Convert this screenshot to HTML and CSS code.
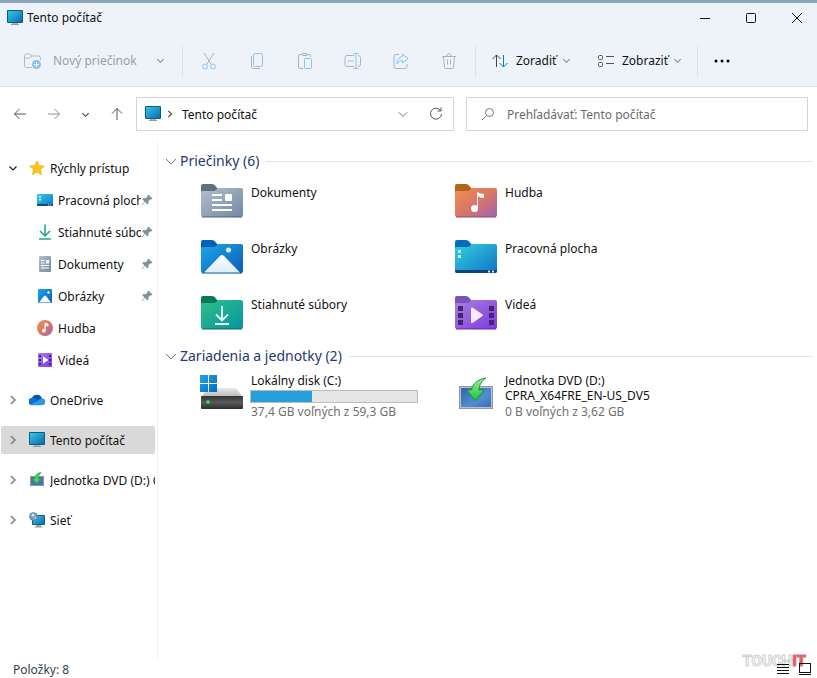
FILE: index.html
```html
<!DOCTYPE html>
<html lang="sk">
<head>
<meta charset="utf-8">
<meta name="viewport" content="width=device-width, initial-scale=1">
<title>Tento počítač</title>
<link rel="stylesheet" href="styles.css">
</head>
<body>
<svg class="sprite" aria-hidden="true">
  <defs>
    <linearGradient id="g-screen" x1="0" y1="0" x2="1" y2="1"><stop offset="0" stop-color="#35c8e8"/><stop offset="1" stop-color="#0a6cae"/></linearGradient>
    <linearGradient id="g-doc" x1="0" y1="0" x2="1" y2="1"><stop offset="0" stop-color="#b3c0ce"/><stop offset="1" stop-color="#7188a5"/></linearGradient>
    <linearGradient id="g-pic" x1="0" y1="0" x2="1" y2="1"><stop offset="0" stop-color="#1ba7ea"/><stop offset="1" stop-color="#0c5cb4"/></linearGradient>
    <linearGradient id="g-down" x1="0" y1="0" x2="1" y2="1"><stop offset="0" stop-color="#2fc08a"/><stop offset="1" stop-color="#0594a0"/></linearGradient>
    <linearGradient id="g-music" x1="0" y1="0" x2="1" y2="1"><stop offset="0" stop-color="#f3914c"/><stop offset=".55" stop-color="#d6746c"/><stop offset="1" stop-color="#9a64b4"/></linearGradient>
    <linearGradient id="g-desk" x1="0" y1="0" x2="1" y2="1"><stop offset="0" stop-color="#33d0e0"/><stop offset="1" stop-color="#1272c4"/></linearGradient>
    <linearGradient id="g-video" x1="0" y1="0" x2="1" y2="1"><stop offset="0" stop-color="#a883dc"/><stop offset="1" stop-color="#8136e2"/></linearGradient>
    <linearGradient id="g-snow" x1="0" y1="0" x2="0" y2="1"><stop offset="0" stop-color="#ffffff"/><stop offset="1" stop-color="#dcedfb"/></linearGradient>
    <linearGradient id="g-drive" x1="0" y1="0" x2="0" y2="1"><stop offset="0" stop-color="#333"/><stop offset=".5" stop-color="#5a5a5a"/><stop offset="1" stop-color="#2c2c2c"/></linearGradient>
    <linearGradient id="g-lid" x1="0" y1="0" x2="0" y2="1"><stop offset="0" stop-color="#e8e8e8"/><stop offset="1" stop-color="#bcbcbc"/></linearGradient>
    <linearGradient id="g-win" x1="0" y1="0" x2="1" y2="1"><stop offset="0" stop-color="#22a6e4"/><stop offset="1" stop-color="#0668bd"/></linearGradient>
    <linearGradient id="g-dvd" x1="0" y1="0" x2="1" y2="1"><stop offset="0" stop-color="#3560a8"/><stop offset=".6" stop-color="#4f8fd0"/><stop offset="1" stop-color="#3d6bb0"/></linearGradient>
    <linearGradient id="g-green" x1="0" y1="0" x2="0" y2="1"><stop offset="0" stop-color="#9af09a"/><stop offset="1" stop-color="#20bf38"/></linearGradient>
  </defs>
  <symbol id="i-pc" viewBox="0 0 16 16"><path d="M5 13h6v2H5z" fill="#a7b5be"/><path d="M4 14.5h8" stroke="#8b9aa5"/><rect x="0" y="0" width="16" height="13" rx="1" fill="#125a80"/><rect x="1" y="1" width="14" height="11" fill="url(#g-screen)"/></symbol>
  <symbol id="i-down" viewBox="0 0 10 10"><path d="M1.500 3.500 5 7l3.500-3.500" fill="none" stroke="currentColor" stroke-width="1.200"/></symbol>
  <symbol id="i-down-wide" viewBox="0 0 12 12"><path d="M1 4l5 5 5-5" fill="none" stroke="currentColor"/></symbol>
  <symbol id="i-right" viewBox="0 0 10 10"><path d="M3 1.200 7 5 3 8.800" fill="none" stroke="currentColor" stroke-width="1.600"/></symbol>
  <symbol id="i-pin" viewBox="0 0 12 12"><path d="M7.500.5 11.500 4.500l-1 1-1-.2-2 2 .1 2-1.100 1.100L4 8 .8 11.400.5 11.100 3.600 7.600 1.200 5.200l1.100-1.100 2.200.2 2-1.900-.1-1z" fill="#87919c"/></symbol>
  <symbol id="i-dvd" viewBox="0 0 34 32"><rect x=".5" y="9.500" width="33" height="22" fill="#b9c2cc" stroke="#8d98a5"/><rect x="2" y="11" width="30" height="19" fill="url(#g-dvd)"/><path d="M27 1C19 2 13.500 7 12.500 13H8l8.500 11L25 13h-5c.2-5 2.500-9 7-12z" fill="url(#g-green)" stroke="#159a2c"/></symbol>
  <symbol id="i-dvd-small" viewBox="0 0 16 16"><rect x="1.500" y="4.500" width="13" height="9" fill="#4775ad" stroke="#8d98a5"/><path d="M12 .5C8 1 6 3.500 5.600 6.500H3.300l4.200 5 4.500-5H9.300c0-2.500 1-4.500 2.700-6z" fill="#45d65e" stroke="#1b9c38" stroke-width=".7"/></symbol>
</svg>

<div class="window">
  <header class="chrome">
    <div class="titlebar">
      <svg class="icon16"><use href="#i-pc"/></svg>
      <h1 class="title">Tento počítač</h1>
      <div class="window-controls">
        <button type="button" aria-label="Minimalizovať"><svg class="glyph12" viewBox="0 0 12 12"><path d="M1 6.500h10"/></svg></button>
        <button type="button" aria-label="Maximalizovať"><svg class="glyph12" viewBox="0 0 12 12"><rect x="1.500" y="1.500" width="9" height="9" rx="1"/></svg></button>
        <button type="button" aria-label="Zavrieť"><svg class="glyph12" viewBox="0 0 12 12"><path d="M1 1l10 10M11 1 1 11"/></svg></button>
      </div>
    </div>
    <div class="toolbar">
      <button type="button" class="command new-folder" disabled>
        <svg class="icon18" viewBox="0 0 18 18" fill="none" stroke="#b5bac0"><path d="M8 15.500H2.500a2 2 0 0 1-2-2v-10a1.500 1.500 0 0 1 1.500-1.500h4l2 2h6.500a2 2 0 0 1 2 2V8M.5 6H6l2-2"/><circle cx="12.500" cy="12.500" r="4.500" fill="#8fc1ea" stroke="none"/><path d="M12.500 10v5M10 12.500h5" stroke="#fff"/></svg>
        <span>Nový priečinok</span>
        <svg class="chev"><use href="#i-down"/></svg>
      </button>
      <div class="tools">
        <button type="button" disabled aria-label="Vystrihnúť"><svg class="icon18" viewBox="0 0 18 18" fill="none"><path d="M4 1l7.500 11.500M14 1 6.500 12.500" stroke="#aeb3b9"/><circle cx="5" cy="14.500" r="2.500" stroke="#8fc1ea"/><circle cx="13" cy="14.500" r="2.500" stroke="#8fc1ea"/></svg></button>
        <button type="button" disabled aria-label="Kopírovať"><svg class="icon18" viewBox="0 0 18 18" fill="none"><rect x="5.500" y="1.500" width="9" height="13" rx="2" stroke="#8fc1ea"/><path d="M3.500 4v10a2.500 2.500 0 0 0 2.500 2.500h6" stroke="#aeb3b9"/></svg></button>
        <button type="button" disabled aria-label="Prilepiť"><svg class="icon18" viewBox="0 0 18 18" fill="none"><path d="M7 16.500H4a1.500 1.500 0 0 1-1.500-1.500V4A1.500 1.500 0 0 1 4 2.500h2m5 0h2A1.500 1.500 0 0 1 14.500 4v1M6 1.500h5v2H6z" stroke="#aeb3b9"/><rect x="8.500" y="6.500" width="7" height="10" rx="1" stroke="#8fc1ea"/></svg></button>
        <button type="button" disabled aria-label="Premenovať"><svg class="icon18" viewBox="0 0 18 18" fill="none"><path d="M10 3.500H3a2 2 0 0 0-2 2v7a2 2 0 0 0 2 2h7M14 3.500a2.500 2.500 0 0 1 2.500 2V12a2.500 2.500 0 0 1-2.500 2.500" stroke="#aeb3b9"/><path d="M9.500 1.500h5M9.500 16.500h5M12 1.500v15M3.500 9h6" stroke="#8fc1ea"/></svg></button>
        <button type="button" disabled aria-label="Zdieľať"><svg class="icon18" viewBox="0 0 18 18" fill="none"><path d="M7 2.500H4A2 2 0 0 0 2 4.500v10a2 2 0 0 0 2 2h9a2 2 0 0 0 2-2V12" stroke="#aeb3b9"/><path d="M10.500 2 16 6.500 10.500 11V8.500C8 8.500 6.500 9.500 5 12c0-4 2-7 5.500-7.500z" stroke="#8fc1ea"/></svg></button>
        <button type="button" disabled aria-label="Odstrániť"><svg class="icon18" viewBox="0 0 18 18" fill="none" stroke="#aeb3b9"><path d="M2 4.500h14M7 4c0-3 4-3 4 0M3.500 4.500l1 11a1 1 0 0 0 1 1h7a1 1 0 0 0 1-1l1-11M7.500 7.500v5M10.500 7.500v5"/></svg></button>
      </div>
      <div class="menus">
        <button type="button" class="command sort"><svg class="icon18" viewBox="0 0 18 18" fill="none"><path d="M5.500 15V3M1.500 7l4-4 4 4" stroke="#444"/><path d="M12.500 3v12M8.500 11l4 4 4-4" stroke="#1975bd"/></svg><span>Zoradiť</span><svg class="chev"><use href="#i-down"/></svg></button>
        <button type="button" class="command view"><svg class="icon18" viewBox="0 0 18 18" fill="none" stroke="#555"><rect x="1.500" y="3.500" width="4" height="4" rx="1"/><rect x="1.500" y="10.500" width="4" height="4" rx="1"/><path d="M9 4.500h8M9 11.500h8"/></svg><span>Zobraziť</span><svg class="chev"><use href="#i-down"/></svg></button>
      </div>
      <button type="button" class="more" aria-label="Ďalšie možnosti"><svg class="icon18" viewBox="0 0 18 18"><circle cx="3" cy="9" r="1.500"/><circle cx="9" cy="9" r="1.500"/><circle cx="15" cy="9" r="1.500"/></svg></button>
    </div>
  </header>

  <div class="navrow">
    <nav class="history" aria-label="História">
      <button type="button" aria-label="Späť"><svg class="glyph14" viewBox="0 0 14 14"><path d="M13 7H1.500M6.500 2l-5 5 5 5"/></svg></button>
      <button type="button" class="faded" aria-label="Dopredu"><svg class="glyph14" viewBox="0 0 14 14"><path d="M1 7h11.500M7.500 2l5 5-5 5"/></svg></button>
      <button type="button" class="recent" aria-label="Posledné umiestnenia"><svg class="chev"><use href="#i-down"/></svg></button>
      <button type="button" aria-label="Nahor"><svg class="glyph14" viewBox="0 0 14 14"><path d="M7 13V1.500M2 6.500l5-5 5 5"/></svg></button>
    </nav>
    <div class="address">
      <svg class="icon16"><use href="#i-pc"/></svg>
      <svg class="crumb"><use href="#i-right"/></svg>
      <span class="path">Tento počítač</span>
      <button type="button" aria-label="Predchádzajúce umiestnenia"><svg class="chev-lg"><use href="#i-down-wide"/></svg></button>
      <button type="button" aria-label="Obnoviť"><svg class="glyph14" viewBox="0 0 14 14"><path d="M11.500 3.500A5.500 5.500 0 1 0 12.500 7M12 .5v3.500H8.500"/></svg></button>
    </div>
    <label class="search">
      <svg class="glyph14" viewBox="0 0 14 14"><circle cx="8.500" cy="5.500" r="4"/><path d="M5.500 8.500 1 13"/></svg>
      <input type="search" placeholder="Prehľadávať: Tento počítač" aria-label="Prehľadávať: Tento počítač">
    </label>
  </div>

  <div class="body">
    <nav class="sidebar" aria-label="Navigácia">
      <ul class="tree">
        <li>
          <a href="#" class="node"><svg class="twist open"><use href="#i-down"/></svg><svg class="icon16" viewBox="0 0 16 16"><path d="M8 .8l2.200 4.700 5.200.6-3.800 3.500 1 5.200L8 12.300l-4.600 2.500 1-5.200L.6 6.100l5.200-.6z" fill="#fcc419" stroke="#eda914" stroke-width=".6"/></svg><span>Rýchly prístup</span></a>
          <ul class="subtree">
            <li><a href="#" class="node"><svg class="icon16" viewBox="0 0 16 16"><rect y="2" width="16" height="12" rx="1" fill="url(#g-desk)"/><path d="M0 12h16v1a1 1 0 0 1-1 1H1a1 1 0 0 1-1-1z" fill="#0b4f86"/><path d="M2 4h2v1.500H2zM2 7h2v1.500H2zM11 12.500h1v1h-1zM13 12.500h1v1h-1z" fill="#d6f7fb"/></svg><span>Pracovná plocha</span><svg class="pin"><use href="#i-pin"/></svg></a></li>
            <li><a href="#" class="node"><svg class="icon16" viewBox="0 0 16 16" fill="none" stroke="#27a988" stroke-width="1.600"><path d="M8 .5v11M3 7l5 4.800L13 7M2 15h12"/></svg><span>Stiahnuté súbory</span><svg class="pin"><use href="#i-pin"/></svg></a></li>
            <li><a href="#" class="node"><svg class="icon16" viewBox="0 0 16 16"><rect x="2" width="12" height="16" rx="1" fill="url(#g-doc)"/><path d="M4 4.500h3.500M4 7h3.500M4 9.500h8M4 12h8" stroke="#fff"/><path d="M9 4h3v3.500H9z" fill="#fff"/></svg><span>Dokumenty</span><svg class="pin"><use href="#i-pin"/></svg></a></li>
            <li><a href="#" class="node"><svg class="icon16" viewBox="0 0 16 16"><rect x="1" y="1" width="14" height="14" rx="1" fill="url(#g-pic)"/><path d="M2 14.500 7 8q1-1 2 0l5 6.500z" fill="#f2f9ff"/><circle cx="11.500" cy="4.500" r="1.200" fill="#fff"/></svg><span>Obrázky</span><svg class="pin"><use href="#i-pin"/></svg></a></li>
            <li><a href="#" class="node"><svg class="icon16" viewBox="0 0 16 16"><circle cx="8" cy="8" r="8" fill="url(#g-music)"/><circle cx="6.800" cy="10.700" r="1.900" fill="#fff"/><path d="M8 10.500V3l3 1v2L9 5.300" fill="#fff" stroke="#fff" stroke-width=".9"/></svg><span>Hudba</span></a></li>
            <li><a href="#" class="node"><svg class="icon16" viewBox="0 0 16 16"><rect x="1" y="1" width="14" height="14" rx="1" fill="url(#g-video)"/><path d="M3 3v11M13 3v11" stroke="#45207c" stroke-width="2" stroke-dasharray="2 2"/><path d="M6 4.500v7L11.500 8z" fill="#fff"/></svg><span>Videá</span></a></li>
          </ul>
        </li>
        <li><a href="#" class="node"><svg class="twist"><use href="#i-right"/></svg><svg class="icon16" viewBox="0 0 16 16"><path d="M3.500 13A3.500 3.500 0 0 1 3 6 5.300 5.300 0 0 1 13 6.500z" fill="#0b55ad"/><path d="M3 6a5 5 0 0 1 3.500.5l6 3L3.500 13.300A3.600 3.600 0 0 1 3 6z" fill="#0d6fd0"/><path d="M1.500 12.500 8.500 9q1.500-2.500 4.500-2.500a3.400 3.400 0 0 1 0 6.800H3.500q-1.200 0-2-.8z" fill="#2a9be8"/></svg><span>OneDrive</span></a></li>
        <li><a href="#" class="node selected" aria-current="page"><svg class="twist"><use href="#i-right"/></svg><svg class="icon16"><use href="#i-pc"/></svg><span>Tento počítač</span></a></li>
        <li><a href="#" class="node"><svg class="twist"><use href="#i-right"/></svg><svg class="icon16"><use href="#i-dvd-small"/></svg><span>Jednotka DVD (D:) CPRA_X64FRE_EN-US_DV5</span></a></li>
        <li><a href="#" class="node"><svg class="twist"><use href="#i-right"/></svg><svg class="icon16" viewBox="0 0 16 16"><path d="M7 13h5v2H7z" fill="#9aa8b2"/><path d="M5.500 15h8" stroke="#8b9aa5"/><rect x="3" y="3" width="13" height="10" rx="1" fill="#125a80"/><rect x="4" y="4" width="11" height="8" fill="url(#g-screen)"/><circle cx="4.500" cy="4.500" r="4" fill="#6f9fbd" stroke="#4b7c9b" stroke-width=".6"/><path d="M2 3l2-1.500L6 3 4 5zM5 6l2-1v2z" fill="#d7e7f0"/></svg><span>Sieť</span></a></li>
      </ul>
    </nav>

    <main class="content">
      <section>
        <h2 class="group"><svg class="group-chev"><use href="#i-down-wide"/></svg>Priečinky (6)</h2>
        <div class="tiles">
          <a href="#" class="tile"><svg class="folder" viewBox="0 0 42 34"><path d="M0 8V2q0-2 2-2h9q2 0 3.500 2L17 5v4H0z" fill="#5c7282"/><path d="M0 8q0-1 2-1h11q2 0 4-3h23q2 0 2 2v25q0 2-2 2H2q-2 0-2-2z" fill="url(#g-doc)"/><path d="M1 33h40" stroke="#51657c"/><path d="M11 11h10M11 16h10M11 21h20M11 26h20" stroke="#fff" stroke-width="2"/><rect x="24" y="10" width="7" height="7" rx="1" fill="#fff"/></svg><span class="name">Dokumenty</span></a>
          <a href="#" class="tile"><svg class="folder" viewBox="0 0 42 34"><path d="M0 8V2q0-2 2-2h9q2 0 3.500 2L17 5v4H0z" fill="#b5641f"/><path d="M0 8q0-1 2-1h11q2 0 4-3h23q2 0 2 2v25q0 2-2 2H2q-2 0-2-2z" fill="url(#g-music)"/><path d="M1 33h40" stroke="#8d4f60"/><circle cx="19.500" cy="24.500" r="3.500" fill="#fff"/><path d="M22 25V8q3 2 7 2v4q-4 0-6-2v13z" fill="#fff"/></svg><span class="name">Hudba</span></a>
          <a href="#" class="tile"><svg class="folder" viewBox="0 0 42 34"><path d="M0 8V2q0-2 2-2h9q2 0 3.500 2L17 5v4H0z" fill="#0561b5"/><path d="M0 8q0-1 2-1h11q2 0 4-3h23q2 0 2 2v25q0 2-2 2H2q-2 0-2-2z" fill="url(#g-pic)"/><path d="M1 33h40" stroke="#0a4b8c"/><path d="M3 32.500 19 16q2-2 4 0l16 16.500z" fill="url(#g-snow)"/><circle cx="27.500" cy="10" r="2.500" fill="#eaf6ff"/></svg><span class="name">Obrázky</span></a>
          <a href="#" class="tile"><svg class="folder" viewBox="0 0 42 34"><path d="M0 8V2q0-2 2-2h9q2 0 3.500 2L17 5v4H0z" fill="#066cc0"/><path d="M0 8q0-1 2-1h11q2 0 4-3h23q2 0 2 2v25q0 2-2 2H2q-2 0-2-2z" fill="url(#g-desk)"/><path d="M0 30h42v1q0 2-2 2H2q-2 0-2-2z" fill="#0c4577"/><path d="M3 10h3v3H3zM3 15h3v3H3z" fill="#c5fbfb"/><path d="M33 30.500h2v2h-2zM37 30.500h2v2h-2z" fill="#c3e6f8"/></svg><span class="name">Pracovná plocha</span></a>
          <a href="#" class="tile"><svg class="folder" viewBox="0 0 42 34"><path d="M0 8V2q0-2 2-2h9q2 0 3.500 2L17 5v4H0z" fill="#087a58"/><path d="M0 8q0-1 2-1h11q2 0 4-3h23q2 0 2 2v25q0 2-2 2H2q-2 0-2-2z" fill="url(#g-down)"/><path d="M1 33h40" stroke="#08695f"/><path d="M21 10v14M15 18.500l6 6 6-6M14 28h14" fill="none" stroke="#e8fff8" stroke-width="1.800"/></svg><span class="name">Stiahnuté súbory</span></a>
          <a href="#" class="tile"><svg class="folder" viewBox="0 0 42 34"><path d="M0 8V2q0-2 2-2h9q2 0 3.500 2L17 5v4H0z" fill="#7a55b5"/><path d="M0 8q0-1 2-1h11q2 0 4-3h23q2 0 2 2v25q0 2-2 2H2q-2 0-2-2z" fill="url(#g-video)"/><path d="M1 33h40" stroke="#5b2d9c"/><path d="M3 10h5v5H3zM3 17h5v5H3zM3 24h5v5H3zM34 10h5v5h-5zM34 17h5v5h-5zM34 24h5v5h-5z" fill="#45256f"/><path d="M16 12.500q0-1.500 1.500-1l10 7q1 .8 0 1.600l-10 7q-1.500.5-1.500-1z" fill="#f5edff"/></svg><span class="name">Videá</span></a>
        </div>
      </section>
      <section>
        <h2 class="group"><svg class="group-chev"><use href="#i-down-wide"/></svg>Zariadenia a jednotky (2)</h2>
        <div class="tiles drives">
          <a href="#" class="tile"><svg class="drive-icon" viewBox="0 0 44 36"><path d="M8 13h28l6 8H2z" fill="url(#g-lid)"/><rect x="1" y="21" width="42" height="13" rx="1" fill="url(#g-drive)"/><circle cx="8" cy="27" r="1.800" fill="#45e05a"/><path d="M0 0h8v8H0zM9 0h8v8H9zM0 9h8v8H0zM9 9h8v8H9z" fill="url(#g-win)"/></svg><div class="details"><span>Lokálny disk (C:)</span><div class="usage" role="meter" aria-valuemin="0" aria-valuemax="100" aria-valuenow="37" aria-label="Využitie disku C:"><div class="used" style="width: 37%"></div></div><span class="free">37,4 GB voľných z 59,3 GB</span></div></a>
          <a href="#" class="tile"><svg class="drive-icon" viewBox="-5 -2 44 36"><use href="#i-dvd" width="34" height="32"/></svg><div class="details"><span>Jednotka DVD (D:)</span><span>CPRA_X64FRE_EN-US_DV5</span><span class="free last">0 B voľných z 3,62 GB</span></div></a>
        </div>
      </section>
    </main>
  </div>

  <footer class="status">
    <span class="count">Položky: 8</span>
    <button type="button" aria-label="Podrobnosti"><svg class="glyph12" viewBox="0 0 12 12"><path d="M0 1.500h12M0 4.500h12M0 7.500h12M0 10.500h12"/></svg></button>
    <button type="button" aria-label="Veľké ikony"><svg class="glyph12" viewBox="0 0 12 12"><rect x=".5" y=".5" width="11" height="9"/><path d="M0 11.500h12"/></svg></button>
    <div class="watermark">TOUCH<b>IT</b></div>
  </footer>
</div>
</body>
</html>
```
FILE: styles.css
```css
* { box-sizing: border-box; }

body {
  margin: 0;
  font: 12px/15px "Noto Sans", "Open Sans", sans-serif;
  color: #111;
  background: #fff;
}

h1, h2, ul { margin: 0; padding: 0; font-weight: 400; }
ul { list-style: none; }
a { color: inherit; text-decoration: none; }
svg { flex: none; }

button {
  display: flex;
  align-items: center;
  justify-content: center;
  padding: 0;
  border: 0;
  background: none;
  font: inherit;
  color: inherit;
}

.sprite { position: absolute; width: 0; height: 0; }
.icon16 { width: 16px; height: 16px; }
.icon18 { width: 18px; height: 18px; }
.glyph12 { width: 12px; height: 12px; fill: none; stroke: #111; }
.glyph14 { width: 14px; height: 14px; fill: none; stroke: #555; }
.chev { width: 9px; height: 9px; color: #888; }

.window {
  display: flex;
  flex-direction: column;
  min-height: 100vh;
  border-top: 3px solid #8ba6b8;
}

.chrome { background: #eef3fa; border-bottom: 1px solid #dfe3e8; }

.titlebar { display: flex; align-items: center; height: 29px; padding: 0 5px 0 7px; }
.title { margin-left: 4px; font-size: 12px; }
.window-controls { display: flex; gap: 16px; margin-left: auto; }
.window-controls button { width: 30px; height: 28px; }

.toolbar { display: flex; align-items: center; height: 54px; padding: 3px 24px 0; }
.command { white-space: nowrap; }
.command span { margin-left: 7px; }
.command .chev { margin-left: auto; }
.new-folder { width: 141px; color: #9a9fa6; }
.new-folder span { margin-left: 11px; }
.tools {
  display: flex;
  gap: 30px;
  margin-left: 17px;
  padding: 7px 17px;
  border: solid #dce1e7;
  border-width: 0 1px;
}
.menus { display: flex; gap: 26px; padding: 7px 15px; border-right: 1px solid #dce1e7; }
.sort { width: 80px; }
.view { width: 85px; }
.more { margin-left: 15px; }

.navrow { display: flex; padding: 10px 9px 10px 0; }
.history { display: flex; align-items: center; gap: 20px; width: 136px; padding-left: 13px; }
.history .recent { width: 9px; }
.recent .chev { color: #444; }
.faded { opacity: .65; }

.address, .search { display: flex; align-items: center; height: 34px; border: 1px solid #d6d6d6; background: #fff; }
.address { flex: 21 1 0; padding: 0 10px 0 8px; }
.address button { width: 14px; height: 14px; margin-left: 19px; }
.crumb { width: 8px; height: 8px; margin: 0 8px 0 5px; color: #555; }
.path { flex: 1; }
.chev-lg { width: 10px; height: 10px; color: #555; }
.search { flex: 22 1 0; margin-left: 12px; padding: 0 14px; }
.search .glyph14 { stroke: #777; }
.search input { flex: 1; min-width: 0; margin-left: 12px; padding: 0; border: 0; outline: 0; background: none; font: inherit; }
.search input::placeholder { color: #6b6b6b; opacity: 1; }

.body { display: flex; flex: 1; }

.sidebar { flex: none; width: 158px; padding: 13px 2px 0 1px; border-right: 1px solid #f2f2f2; }
.tree { display: grid; gap: 12px; grid-template-columns: minmax(0, 1fr); }
.subtree { display: grid; gap: 4px; margin-top: 4px; grid-template-columns: minmax(0, 1fr); }
.node { display: flex; align-items: center; height: 28px; padding-left: 7px; border-radius: 2px; }
.node span { flex: 1; margin-left: 5px; overflow: hidden; white-space: nowrap; }
.subtree .node { padding: 0 2px 0 36px; }
.selected { background: #d9d9d9; }
.twist { width: 10px; height: 10px; margin-right: 11px; color: #858585; }
.twist.open { color: #222; }
.pin { width: 12px; height: 12px; }

.content { flex: 1; min-width: 0; padding: 8px 4px 0 7px; }
.group { display: flex; align-items: center; height: 24px; font-size: 14px; line-height: 20px; color: #26376f; white-space: nowrap; }
.group::after { content: ""; flex: 1; height: 1px; margin-left: 7px; background: #e2e2e2; }
.group-chev { width: 12px; height: 12px; margin-right: 3px; color: #777; }

.tiles { display: grid; grid-template-columns: repeat(auto-fill, 254px); padding-left: 36px; margin-bottom: 3px; }
.drives { margin-top: 5px; }
.tile { display: flex; height: 56px; }
.folder { width: 42px; height: 34px; margin-top: 11px; }
.name { margin: 12px 0 0 8px; }
.drive-icon { width: 44px; height: 36px; margin: 2px 0 0 -1px; }
.details { display: flex; flex-direction: column; width: 168px; margin-left: 6px; white-space: nowrap; }
.details span { margin-left: 1px; }
.details .free { color: #707070; }
.details .last { margin-top: 1px; }

.usage { height: 13px; margin: 2px 0 1px; border: 1px solid #bcbcbc; background: #e6e6e6; }
.used { height: 100%; background: #26a0da; }

.status { position: relative; display: flex; align-items: center; gap: 10px; height: 18px; padding: 0 6px 0 13px; color: #33404d; }
.count { flex: 1; }
.watermark {
  position: absolute;
  right: 11px;
  bottom: 8px;
  font: 700 15px/18px "Roboto", sans-serif;
  color: #fff;
  -webkit-text-stroke: 1px #d0d0d0;
  pointer-events: none;
}
.watermark b { color: #e0525f; -webkit-text-stroke: 1px #e0727c; }
.status button { position: relative; z-index: 1; }
```
